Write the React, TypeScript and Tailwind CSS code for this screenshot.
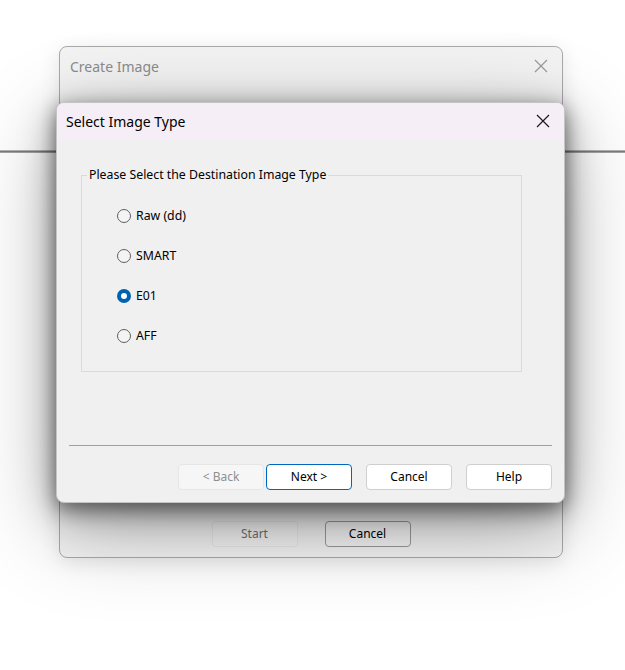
import React, { useState } from 'react';

const ui = { fontFamily: '"Noto Sans", "Open Sans", sans-serif' };

const options = ['Raw (dd)', 'SMART', 'E01', 'AFF'];

const CloseIcon: React.FC<{ className?: string }> = ({ className }) => (
  <svg width="14" height="14" viewBox="0 0 14 14" className={className}>
    <path d="M1 1L13 13M13 1L1 13" stroke="currentColor" strokeWidth="1.2" fill="none" />
  </svg>
);

const Radio: React.FC<{ checked: boolean }> = ({ checked }) =>
  checked ? (
    <span className="w-[14px] h-[14px] rounded-full bg-[#0063b1] flex items-center justify-center shrink-0">
      <span className="w-[6px] h-[6px] rounded-full bg-white" />
    </span>
  ) : (
    <span className="w-[14px] h-[14px] rounded-full border border-[#5f5f5f] bg-[#f4f4f4] shrink-0" />
  );

export default function App() {
  const [selected, setSelected] = useState(2);

  return (
    <div className="relative w-[625px] h-[670px] bg-white overflow-hidden" style={ui}>
      {/* background rule from the window behind */}
      <div className="absolute left-0 right-0 top-[150px] h-[3px] border-t border-b border-t-[#b4b4b4] border-b-[#a4a4a4] bg-[#7c7c7c]" />

      {/* Create Image (parent dialog) */}
      <div className="relative ml-[59px] mt-[46px] w-[504px] h-[512px] rounded-[8px] border border-[#a9a9a9] bg-[#f3f3f3] shadow-[0_4px_20px_rgba(0,0,0,0.1)]">
        <div className="flex items-center justify-between h-[38px] pl-[10px] pr-[14px]">
          <span className="text-[14px] text-[#8b8b8b]">Create Image</span>
          <CloseIcon className="text-[#9a9a9a]" />
        </div>
        <div className="absolute left-0 right-0 bottom-0 h-[56px] flex items-start justify-center gap-[27px] pt-[20px]">
          <button className="w-[86px] h-[26px] rounded-[4px] border border-[rgba(0,0,0,0.05)] bg-[rgba(255,255,255,0.12)] text-[12px] text-[#6f6f6f]">Start</button>
          <button className="w-[86px] h-[26px] rounded-[4px] border border-[#9a9a9a] bg-[rgba(255,255,255,0.18)] text-[12px] text-black">Cancel</button>
        </div>

        {/* Select Image Type (modal) */}
        <div className="absolute left-[-4px] top-[55px] w-[509px] h-[401px] rounded-[8px] border border-[#c4c4c4] bg-[#f0f0f0] overflow-hidden shadow-[0_6px_18px_rgba(0,0,0,0.4),0_10px_36px_rgba(0,0,0,0.35),0_24px_90px_rgba(0,0,0,0.3)]">
          <div className="flex items-center justify-between h-[36px] pl-[9px] pr-[14px] bg-[#f6eef6]">
            <span className="text-[14px] text-black">Select Image Type</span>
            <CloseIcon className="text-[#1a1a1a]" />
          </div>

          <div className="px-[24px] pt-[30px]">
            <fieldset className="w-[441px] h-[203px] border border-[#dadada] pl-[35px] pr-[8px] pt-[27px]">
              <legend className="ml-[-30px] px-[2px] text-[12.3px] text-black leading-none">
                Please Select the Destination Image Type
              </legend>
              <div className="flex flex-col gap-[24px]">
                {options.map((label, i) => (
                  <label
                    key={label}
                    className="flex items-center gap-[5px] h-[16px] text-[12.3px] text-black cursor-default"
                    onClick={() => setSelected(i)}
                  >
                    <Radio checked={selected === i} />
                    <span>{label}</span>
                  </label>
                ))}
              </div>
            </fieldset>
          </div>

          <div className="mx-[12px] mt-[73px] border-t border-[#a0a0a0]" />

          <div className="flex justify-end pr-[12px] pt-[18px]">
            <div className="flex gap-[2px] mr-[14px]">
              <button className="w-[86px] h-[26px] rounded-[4px] border border-[#e6e6e6] bg-[#f6f6f6] text-[12px] text-[#8f8f8f]">&lt; Back</button>
              <button className="w-[86px] h-[26px] rounded-[4px] border border-[#0067c0] bg-white text-[12px] text-black">Next &gt;</button>
            </div>
            <div className="flex gap-[14px]">
              <button className="w-[86px] h-[26px] rounded-[4px] border border-[#cfcfcf] bg-white text-[12px] text-black">Cancel</button>
              <button className="w-[86px] h-[26px] rounded-[4px] border border-[#cfcfcf] bg-white text-[12px] text-black">Help</button>
            </div>
          </div>
        </div>
      </div>
    </div>
  );
}
